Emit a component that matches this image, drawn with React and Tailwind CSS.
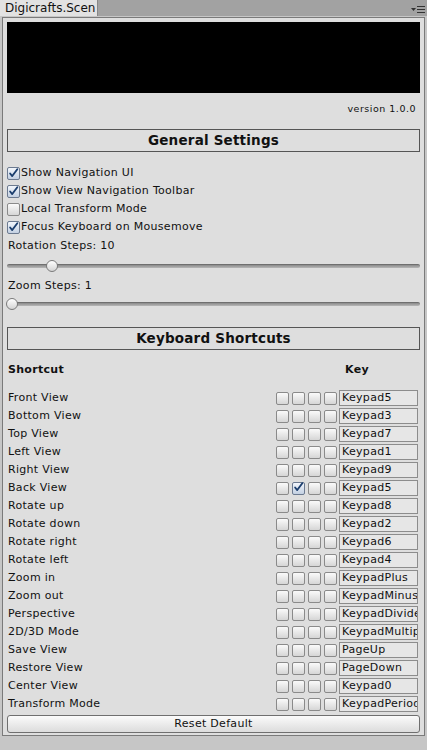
import React from "react";

const font = { fontFamily: '"DejaVu Sans", Verdana, sans-serif' };

function Check({ checked }) {
  return (
    <div
      className={
        "w-[13px] h-[13px] rounded-[2px] border flex items-center justify-center shrink-0 " +
        (checked
          ? "border-[#6c7a90] bg-gradient-to-b from-[#f2f6fc] to-[#c3d0e2]"
          : "border-[#8a8a8a] bg-gradient-to-b from-[#fafafa] to-[#d6d6d6]")
      }
    >
      {checked ? (
        <svg width="13" height="13" viewBox="0 0 13 13" className="-mt-[1px]">
          <path d="M2.5 6.5 L5 9.5 L11 1.5" stroke="#1b3e6e" strokeWidth="2.2" fill="none" strokeLinecap="round" strokeLinejoin="round" />
        </svg>
      ) : null}
    </div>
  );
}

function Slider({ pos }) {
  return (
    <div className="relative h-[12px] flex items-center">
      <div className="w-full h-[4px] rounded-full bg-gradient-to-b from-[#8a8a8a] to-[#b8b8b8] border-t border-[#6f6f6f]" />
      <div
        className="absolute top-[0px] w-[12px] h-[12px] rounded-full border border-[#7a7a7a] bg-gradient-to-b from-[#ffffff] to-[#d4d4d4]"
        style={{ left: pos }}
      />
    </div>
  );
}

const rows = [
  ["Front View", "Keypad5"],
  ["Bottom View", "Keypad3"],
  ["Top View", "Keypad7"],
  ["Left View", "Keypad1"],
  ["Right View", "Keypad9"],
  ["Back View", "Keypad5", true],
  ["Rotate up", "Keypad8"],
  ["Rotate down", "Keypad2"],
  ["Rotate right", "Keypad6"],
  ["Rotate left", "Keypad4"],
  ["Zoom in", "KeypadPlus"],
  ["Zoom out", "KeypadMinus"],
  ["Perspective", "KeypadDivide"],
  ["2D/3D Mode", "KeypadMultiply"],
  ["Save View", "PageUp"],
  ["Restore View", "PageDown"],
  ["Center View", "Keypad0"],
  ["Transform Mode", "KeypadPeriod"],
];

export default function App() {
  return (
    <div className="w-[427px] h-[750px] bg-[#c6c6c6] flex flex-col text-[11px] tracking-[0.3px] text-[#111] overflow-hidden" style={font}>
      <div className="h-[16px] bg-[#a2a2a2] flex items-end justify-between shrink-0">
        <div className="h-[16px] w-[98px] bg-[#e2e2e2] border-r border-[#888] flex items-center pl-[5px] text-[12px] tracking-[0px] text-[#111] overflow-hidden whitespace-nowrap">
          Digicrafts.Scen
        </div>
        <div className="flex items-center gap-[1px] pr-[2px] pb-[3px]">
          <svg width="5" height="4" viewBox="0 0 5 4"><path d="M0 0 H5 L2.5 3 Z" fill="#333" /></svg>
          <svg width="8" height="7" viewBox="0 0 8 7"><path d="M0 0.5 H8 M0 3.5 H8 M0 6.5 H8" stroke="#333" strokeWidth="1" /></svg>
        </div>
      </div>
      <div className="mx-[2px] mt-[1px] h-[719px] bg-[#dedede] border border-[#7a7a7a] flex flex-col px-[4px] pt-[4px] shrink-0">
        <div className="h-[71px] bg-black shrink-0" />
        <div className="text-right text-[9.5px] tracking-[0.5px] pr-[4px] mt-[10px] h-[12px] leading-[12px]">version 1.0.0</div>
        <div className="mt-[14px] h-[23px] border border-[#555] flex items-center justify-center font-bold text-[13.5px] tracking-[0.2px] text-[#111]">
          General Settings
        </div>
        <div className="mt-[15px] flex flex-col gap-[5px]">
          {[
            ["Show Navigation UI", true],
            ["Show View Navigation Toolbar", true],
            ["Local Transform Mode", false],
            ["Focus Keyboard on Mousemove", true],
          ].map(([t, c]) => (
            <div key={t} className="flex items-center gap-[1px] h-[13px]">
              <Check checked={c} />
              <span>{t}</span>
            </div>
          ))}
        </div>
        <div className="mt-[5px] h-[13px] leading-[13px] pl-[1px]">Rotation Steps: 10</div>
        <div className="mt-[8px]"><Slider pos={39} /></div>
        <div className="mt-[7px] h-[13px] leading-[13px] pl-[1px]">Zoom Steps: 1</div>
        <div className="mt-[6px]"><Slider pos={-1} /></div>
        <div className="mt-[17px] h-[23px] border border-[#555] flex items-center justify-center font-bold text-[13.5px] tracking-[0.2px] text-[#111]">
          Keyboard Shortcuts
        </div>
        <div className="mt-[13px] flex justify-between font-bold h-[14px] leading-[14px] pr-[2px]">
          <span className="pl-[1px]">Shortcut</span>
          <span className="w-[79px] pl-[6px]">Key</span>
        </div>
        <div className="mt-[13px] flex flex-col gap-[2px]">
          {rows.map(([label, key, chk], i) => (
            <div key={i} className="flex items-center justify-between h-[16px] pr-[2px]">
              <span className="pl-[1px]">{label}</span>
              <div className="flex items-center">
                <div className="flex gap-[3px] mr-[2px]">
                  <Check />
                  <Check checked={!!chk} />
                  <Check />
                  <Check />
                </div>
                <div className="w-[79px] h-[16px] border border-[#8c8c8c] bg-[#e6e6e6] pl-[2px] leading-[14px] overflow-hidden whitespace-nowrap">
                  {key}
                </div>
              </div>
            </div>
          ))}
        </div>
        <div className="mt-[3px] h-[18px] border border-[#6f6f6f] rounded-[3px] bg-gradient-to-b from-[#fbfbfb] to-[#dcdcdc] flex items-center justify-center">
          Reset Default
        </div>
      </div>
    </div>
  );
}
